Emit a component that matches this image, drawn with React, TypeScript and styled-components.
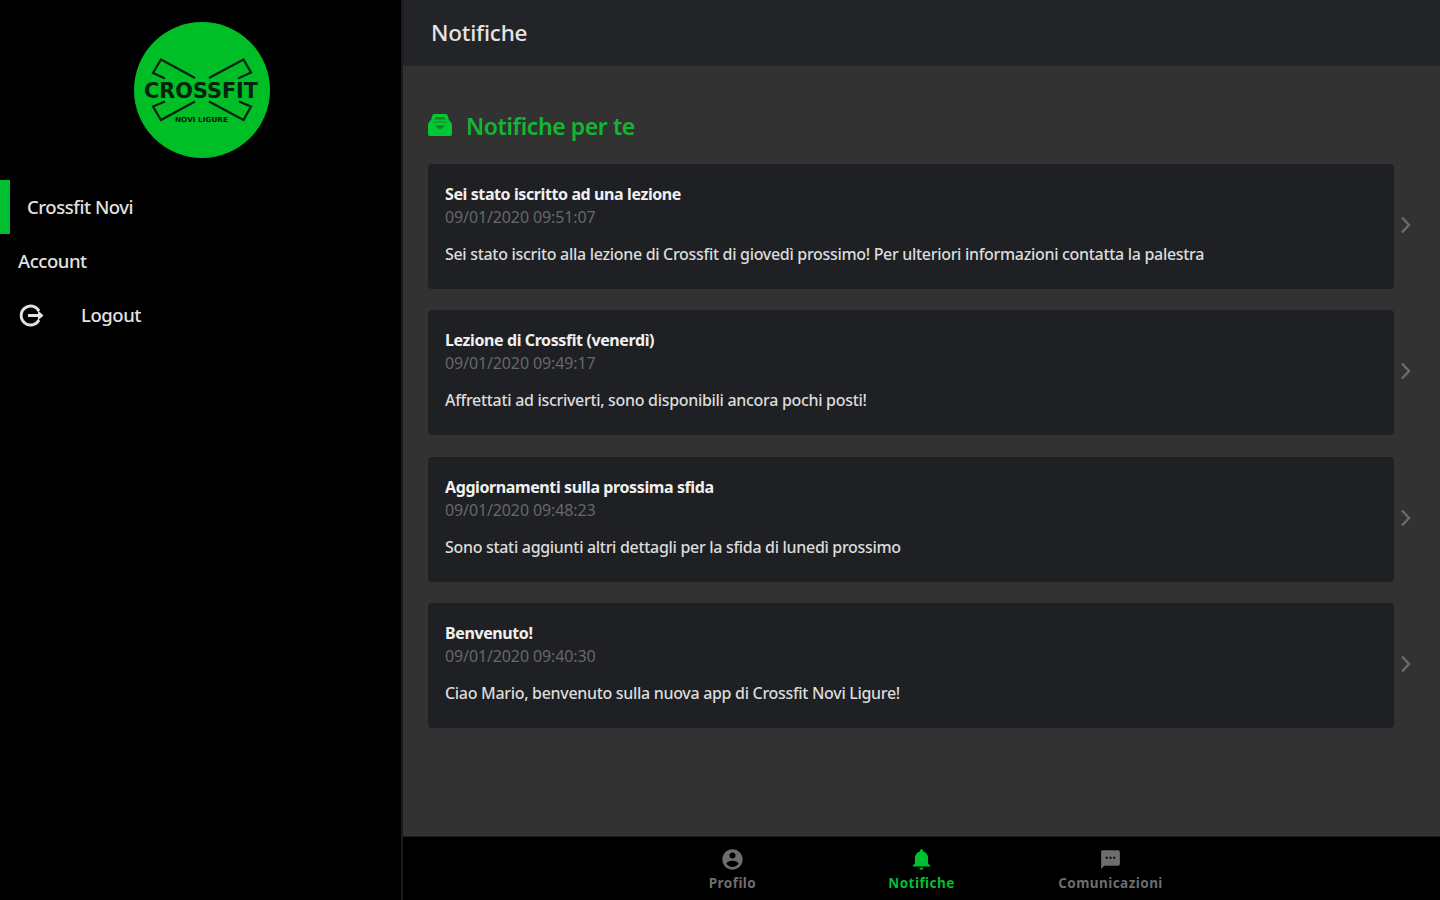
import React from "react";
import styled, { createGlobalStyle } from "styled-components";
import { IoMdContact, IoMdNotifications, IoMdText } from "react-icons/io";

const notifications = [
  {
    title: "Sei stato iscritto ad una lezione",
    date: "09/01/2020 09:51:07",
    text: "Sei stato iscrito alla lezione di Crossfit di giovedì prossimo! Per ulteriori informazioni contatta la palestra",
  },
  {
    title: "Lezione di Crossfit (venerdì)",
    date: "09/01/2020 09:49:17",
    text: "Affrettati ad iscriverti, sono disponibili ancora pochi posti!",
  },
  {
    title: "Aggiornamenti sulla prossima sfida",
    date: "09/01/2020 09:48:23",
    text: "Sono stati aggiunti altri dettagli per la sfida di lunedì prossimo",
  },
  {
    title: "Benvenuto!",
    date: "09/01/2020 09:40:30",
    text: "Ciao Mario, benvenuto sulla nuova app di Crossfit Novi Ligure!",
  },
];

const Logo = () => (
  <svg width="136" height="136" viewBox="0 0 136 136">
    <circle cx="68" cy="68" r="68" fill="#00bf26" />
    <g fill="none" stroke="#07220b" strokeWidth="2.2">
      <path d="M31 56.5 19 51 27 37.5 61 56" />
      <path d="M75 56 109.5 37.5 117 50.5 104 56.5" />
      <path d="M31 79.5 19 84.5 27 98 61 79.5" />
      <path d="M75 79.5 109.5 98 117 84.5 105 79.5" />
    </g>
    <LogoText x="10" y="75.5" fontSize="20.5" textLength="114" lengthAdjust="spacingAndGlyphs">
      CROSSFIT
    </LogoText>
    <LogoText x="41" y="99.5" fontSize="7" textLength="53" lengthAdjust="spacingAndGlyphs">
      NOVI LIGURE
    </LogoText>
  </svg>
);

const LogoutIcon = () => (
  <svg width="27" height="27" viewBox="0 0 27 27" fill="none" stroke="#e2e2e2">
    <path d="M21 9A9.5 9.5 0 1 0 21 18" strokeWidth="2.8" />
    <path d="M10 13.5H22" strokeWidth="3" />
    <path d="M20 8.5 25.5 13.5 20 18.5Z" fill="#e2e2e2" stroke="none" />
  </svg>
);

const InboxIcon = () => (
  <svg width="24" height="22" viewBox="0 0 24 22">
    <path
      d="M6.5 0H17.5Q19 0 19.5 1.3L21 6Q24 8 24 11V20Q24 22 22 22H2Q0 22 0 20V11Q0 8 3 6L4.5 1.3Q5 0 6.5 0Z"
      fill="#00c832"
    />
    <path d="M7.5 3H16.5L17.5 5.5H6.5Z" fill="#217a34" />
    <path d="M4.5 8H19.5" stroke="#149a31" strokeWidth="1.5" />
    <path d="M6.5 11.5H17.5L12 15.5Z" fill="#217a34" />
  </svg>
);

const Chevron = () => (
  <svg width="12" height="20" viewBox="0 0 12 20">
    <path d="M2 2.5 9 10 2 17.5" fill="none" stroke="#6b6b6b" strokeWidth="2.4" />
  </svg>
);

const App = () => {
  return (
    <Page>
      <GlobalStyle />
      <Sidebar>
        <LogoWrapper>
          <Logo />
        </LogoWrapper>
        <ActiveItem>Crossfit Novi</ActiveItem>
        <MenuItem>Account</MenuItem>
        <MenuItem>
          <LogoutIcon />
          Logout
        </MenuItem>
      </Sidebar>
      <Main>
        <Header>Notifiche</Header>
        <Content>
          <SectionTitle>
            <InboxIcon />
            <h2>Notifiche per te</h2>
          </SectionTitle>
          <List>
            {notifications.map((item) => (
              <Row key={item.date}>
                <Card>
                  <CardTitle>{item.title}</CardTitle>
                  <CardDate>{item.date}</CardDate>
                  <CardText>{item.text}</CardText>
                </Card>
                <Chevron />
              </Row>
            ))}
          </List>
        </Content>
        <TabBar>
          <Tab>
            <IoMdContact size={25} />
            Profilo
          </Tab>
          <Tab $active>
            <IoMdNotifications size={25} />
            Notifiche
          </Tab>
          <Tab>
            <IoMdText size={25} />
            Comunicazioni
          </Tab>
        </TabBar>
      </Main>
    </Page>
  );
};

export default App;

const GlobalStyle = createGlobalStyle`
  * {
    box-sizing: border-box;
    margin: 0;
  }
  body {
    background: #000;
    font-family: "Noto Sans", "Open Sans", sans-serif;
    overflow: hidden;
  }
  svg {
    flex-shrink: 0;
  }
`;

const Page = styled.div`
  display: flex;
  width: 1440px;
  height: 900px;
`;

const Sidebar = styled.aside`
  width: 403px;
  border-right: 2px solid #1c1c1d;
  background: #000;
  color: #e2e2e2;
`;

const LogoWrapper = styled.div`
  display: flex;
  justify-content: center;
  height: 180px;
  padding: 22px 0 0 2px;
`;

const LogoText = styled.text`
  font-family: "DejaVu Sans", sans-serif;
  font-weight: 700;
  fill: #07220b;
`;

const MenuItem = styled.div`
  display: flex;
  align-items: center;
  gap: 36px;
  height: 54px;
  padding-left: 18px;
  font-size: 18.5px;
  font-weight: 500;
  line-height: 26px;
  letter-spacing: -0.45px;
`;

const ActiveItem = styled(MenuItem)`
  padding-left: 17px;
  border-left: 10px solid #00bf30;
`;

const Main = styled.main`
  display: flex;
  flex: 1;
  flex-direction: column;
  background: #323232;
`;

const Header = styled.header`
  display: flex;
  align-items: center;
  height: 66px;
  padding: 0 0 1px 28px;
  background: #232428;
  color: #e4e4e4;
  font-size: 22.5px;
  font-weight: 500;
  letter-spacing: -0.2px;
`;

const Content = styled.section`
  flex: 1;
  padding: 44px 25px 0;
`;

const SectionTitle = styled.div`
  display: flex;
  align-items: center;
  gap: 14px;
  height: 32px;

  svg {
    margin-top: -3px;
  }

  h2 {
    color: #14b532;
    font-size: 23px;
    font-weight: 600;
    line-height: 32px;
    letter-spacing: -0.42px;
  }
`;

const List = styled.div`
  display: flex;
  flex-direction: column;
  gap: 21.3px;
  margin-top: 22px;
`;

const Row = styled.div`
  display: flex;
  align-items: center;
  gap: 6px;

  > svg {
    margin-top: -3px;
  }
`;

const Card = styled.article`
  width: 966px;
  height: 125px;
  padding: 19px 17px;
  border-radius: 4px;
  background: #1e2023;
  white-space: nowrap;
`;

const CardTitle = styled.h3`
  color: #f0f0f0;
  font-size: 16px;
  font-weight: 700;
  line-height: 23px;
  letter-spacing: -0.4px;
`;

const CardDate = styled.p`
  color: #66686a;
  font-size: 16px;
  line-height: 23px;
  letter-spacing: -0.12px;
`;

const CardText = styled.p`
  margin-top: 14px;
  color: #dcdcdc;
  font-size: 16px;
  font-weight: 500;
  line-height: 23px;
  letter-spacing: -0.31px;
`;

const TabBar = styled.nav`
  display: flex;
  justify-content: center;
  height: 64px;
  border-top: 1px solid #1a1a1a;
  background: #000;
`;

const Tab = styled.div<{ $active?: boolean }>`
  display: flex;
  flex-direction: column;
  align-items: center;
  width: 189px;
  padding-top: 10px;
  color: ${({ $active }) => ($active ? "#00bf30" : "#6d6d6d")};
  font-size: 13.5px;
  font-weight: 700;
  line-height: 23px;
  letter-spacing: 0.45px;
`;
